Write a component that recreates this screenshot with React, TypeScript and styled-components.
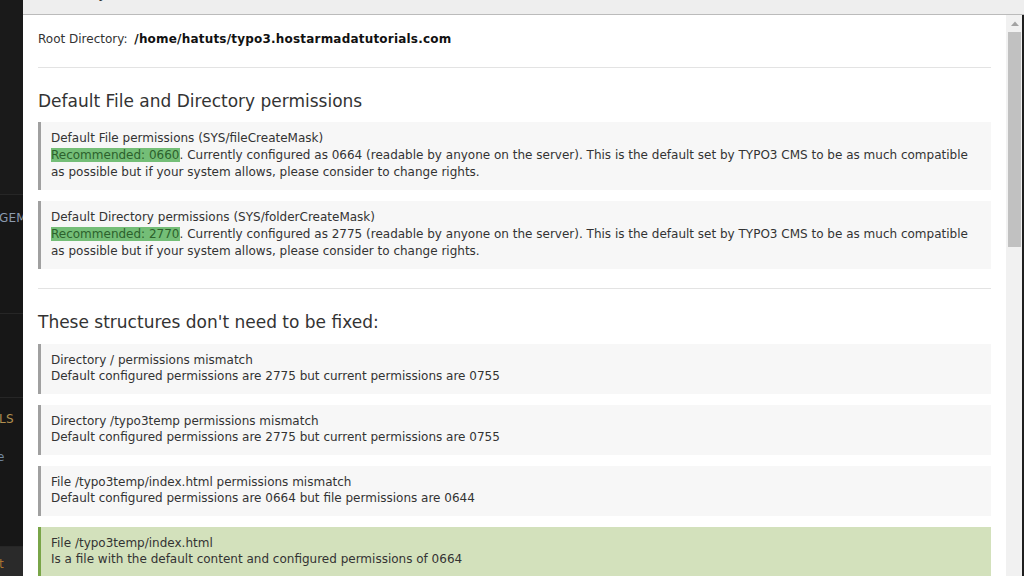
import React from "react";
import styled, { createGlobalStyle } from "styled-components";

const GlobalStyle = createGlobalStyle`
  html, body {
    margin: 0;
    padding: 0;
    height: 100%;
    overflow: hidden;
    background: #1a1a1a;
  }
  #root { height: 100%; }
  * { box-sizing: border-box; }
`;

const Page = styled.div`
  display: flex;
  height: 576px;
  width: 1024px;
  overflow: hidden;
  font-family: "DejaVu Sans", Verdana, sans-serif;
  color: #333;
`;

/* ---------- Sidebar peeking behind the modal ---------- */
const Sidebar = styled.aside`
  width: 23px;
  flex: none;
  display: flex;
  flex-direction: column;
  background: #171717;
  overflow: hidden;
`;

const SideBlock = styled.div<{ $h: number; $bg?: string }>`
  height: ${(p) => p.$h}px;
  flex: none;
  background: ${(p) => p.$bg ?? "#171717"};
  border-bottom: 1px solid #262626;
  display: flex;
  flex-direction: column;
  white-space: nowrap;
`;

const SideBottom = styled.div`
  flex: 1;
  background: #2a2a2a;
  display: flex;
  align-items: center;
  white-space: nowrap;
`;

const SideText = styled.span<{ $color: string; $top: number; $shift?: number }>`
  display: block;
  margin-top: ${(p) => p.$top}px;
  margin-left: ${(p) => p.$shift ?? 0}px;
  font-size: 12px;
  line-height: 14px;
  color: ${(p) => p.$color};
  letter-spacing: 0.2px;
`;

/* ---------- Modal ---------- */
const Modal = styled.section`
  flex: 1;
  display: flex;
  flex-direction: column;
  min-width: 0;
  background: #fff;
`;

const ModalHeader = styled.header`
  height: 15px;
  flex: none;
  background: #eeeeee;
  border-bottom: 1px solid #bbbbbb;
  overflow: hidden;
  padding-left: 15px;
`;

const ModalTitle = styled.h2`
  margin: -16px 0 0;
  font-size: 15px;
  line-height: 18px;
  font-weight: normal;
  color: #333;
`;

const ModalBody = styled.div`
  flex: 1;
  display: flex;
  min-height: 0;
`;

const Content = styled.div`
  flex: 1;
  min-width: 0;
  display: flex;
  flex-direction: column;
  padding: 16px 15px 0 15px;
  overflow: hidden;
  font-size: 12px;
  line-height: 16.5px;
`;

const RootLine = styled.p`
  margin: 0;
  strong {
    font-weight: bold;
    color: #111;
    margin-left: 3px;
    letter-spacing: 0.2px;
  }
`;

const Divider = styled.hr`
  margin: 19px 0 0;
  border: 0;
  border-top: 1px solid #e3e3e3;
  height: 0;
  flex: none;
`;

const Heading = styled.h3`
  margin: 24px 0 12px;
  font-size: 17px;
  line-height: 18.7px;
  font-weight: normal;
  color: #333;
`;

const CalloutList = styled.div`
  display: flex;
  flex-direction: column;
  gap: 11px;
`;

const Callout = styled.div<{ $tone?: "ok" | "info" }>`
  flex: none;
  padding: 8px 10px 9px 10px;
  border-left: 3px solid ${(p) => (p.$tone === "ok" ? "#79a548" : "#a0a0a0")};
  background: ${(p) => (p.$tone === "ok" ? "#d3e1bc" : "#f7f7f7")};
  color: #333;
`;

const CalloutTitle = styled.div``;

const CalloutMessage = styled.div<{ $lh?: number }>`
  line-height: ${(p) => p.$lh ?? 16.5}px;
`;

const Recommended = styled.span`
  background: #74be77;
  color: #2c612c;
`;

/* ---------- Scrollbar ---------- */
const Scrollbar = styled.div`
  width: 16px;
  flex: none;
  display: flex;
  flex-direction: column;
  background: #f1f1f1;
`;

const ScrollArrow = styled.div`
  height: 17px;
  display: flex;
  align-items: center;
  justify-content: center;
  padding-left: 2px;
`;

const ScrollThumb = styled.div`
  height: 215px;
  margin: 0 1px 0 2px;
  background: #c1c1c1;
`;

const RightEdge = styled.div`
  width: 2px;
  flex: none;
  background: #1e1e1e;
`;

const defaultsItems = [
  {
    title: "Default File permissions (SYS/fileCreateMask)",
    rec: "Recommended: 0660",
    rest:
      ". Currently configured as 0664 (readable by anyone on the server). This is the default set by TYPO3 CMS to be as much compatible as possible but if your system allows, please consider to change rights.",
  },
  {
    title: "Default Directory permissions (SYS/folderCreateMask)",
    rec: "Recommended: 2770",
    rest:
      ". Currently configured as 2775 (readable by anyone on the server). This is the default set by TYPO3 CMS to be as much compatible as possible but if your system allows, please consider to change rights.",
  },
];

const structureItems: { title: string; msg: string; ok?: boolean }[] = [
  {
    title: "Directory / permissions mismatch",
    msg: "Default configured permissions are 2775 but current permissions are 0755",
  },
  {
    title: "Directory /typo3temp permissions mismatch",
    msg: "Default configured permissions are 2775 but current permissions are 0755",
  },
  {
    title: "File /typo3temp/index.html permissions mismatch",
    msg: "Default configured permissions are 0664 but file permissions are 0644",
  },
  {
    title: "File /typo3temp/index.html",
    msg: "Is a file with the default content and configured permissions of 0664",
    ok: true,
  },
];

export default function App() {
  return (
    <>
      <GlobalStyle />
      <Page>
        <Sidebar>
          <SideBlock $h={195} $bg="#1a1a1a" />
          <SideBlock $h={119}>
            <SideText $color="#8b9aae" $top={16} $shift={-1}>
              GEMENT
            </SideText>
          </SideBlock>
          <SideBlock $h={84} />
          <SideBlock $h={149}>
            <SideText $color="#b08f4f" $top={14} $shift={-1}>
              LS
            </SideText>
            <SideText $color="#7088a0" $top={24} $shift={-3}>
              e
            </SideText>
          </SideBlock>
          <SideBottom>
            <SideText $color="#a8732e" $top={4} $shift={-1}>
              t
            </SideText>
          </SideBottom>
        </Sidebar>
        <Modal>
          <ModalHeader>
            <ModalTitle>Directory Status</ModalTitle>
          </ModalHeader>
          <ModalBody>
            <Content>
              <RootLine>
                Root Directory: <strong>/home/hatuts/typo3.hostarmadatutorials.com</strong>
              </RootLine>
              <Divider />
              <Heading>Default File and Directory permissions</Heading>
              <CalloutList>
                {defaultsItems.map((it) => (
                  <Callout key={it.title}>
                    <CalloutTitle>{it.title}</CalloutTitle>
                    <CalloutMessage $lh={17.25}>
                      <Recommended>{it.rec}</Recommended>
                      {it.rest}
                    </CalloutMessage>
                  </Callout>
                ))}
              </CalloutList>
              <Divider />
              <Heading>These structures don't need to be fixed:</Heading>
              <CalloutList>
                {structureItems.map((it) => (
                  <Callout key={it.title} $tone={it.ok ? "ok" : "info"}>
                    <CalloutTitle>{it.title}</CalloutTitle>
                    <CalloutMessage>{it.msg}</CalloutMessage>
                  </Callout>
                ))}
              </CalloutList>
            </Content>
            <Scrollbar>
              <ScrollArrow>
                <svg width="8" height="5" viewBox="0 0 8 5">
                  <path d="M0 5 L4 0.5 L8 5 Z" fill="#a3a3a3" />
                </svg>
              </ScrollArrow>
              <ScrollThumb />
            </Scrollbar>
            <RightEdge />
          </ModalBody>
        </Modal>
      </Page>
    </>
  );
}
